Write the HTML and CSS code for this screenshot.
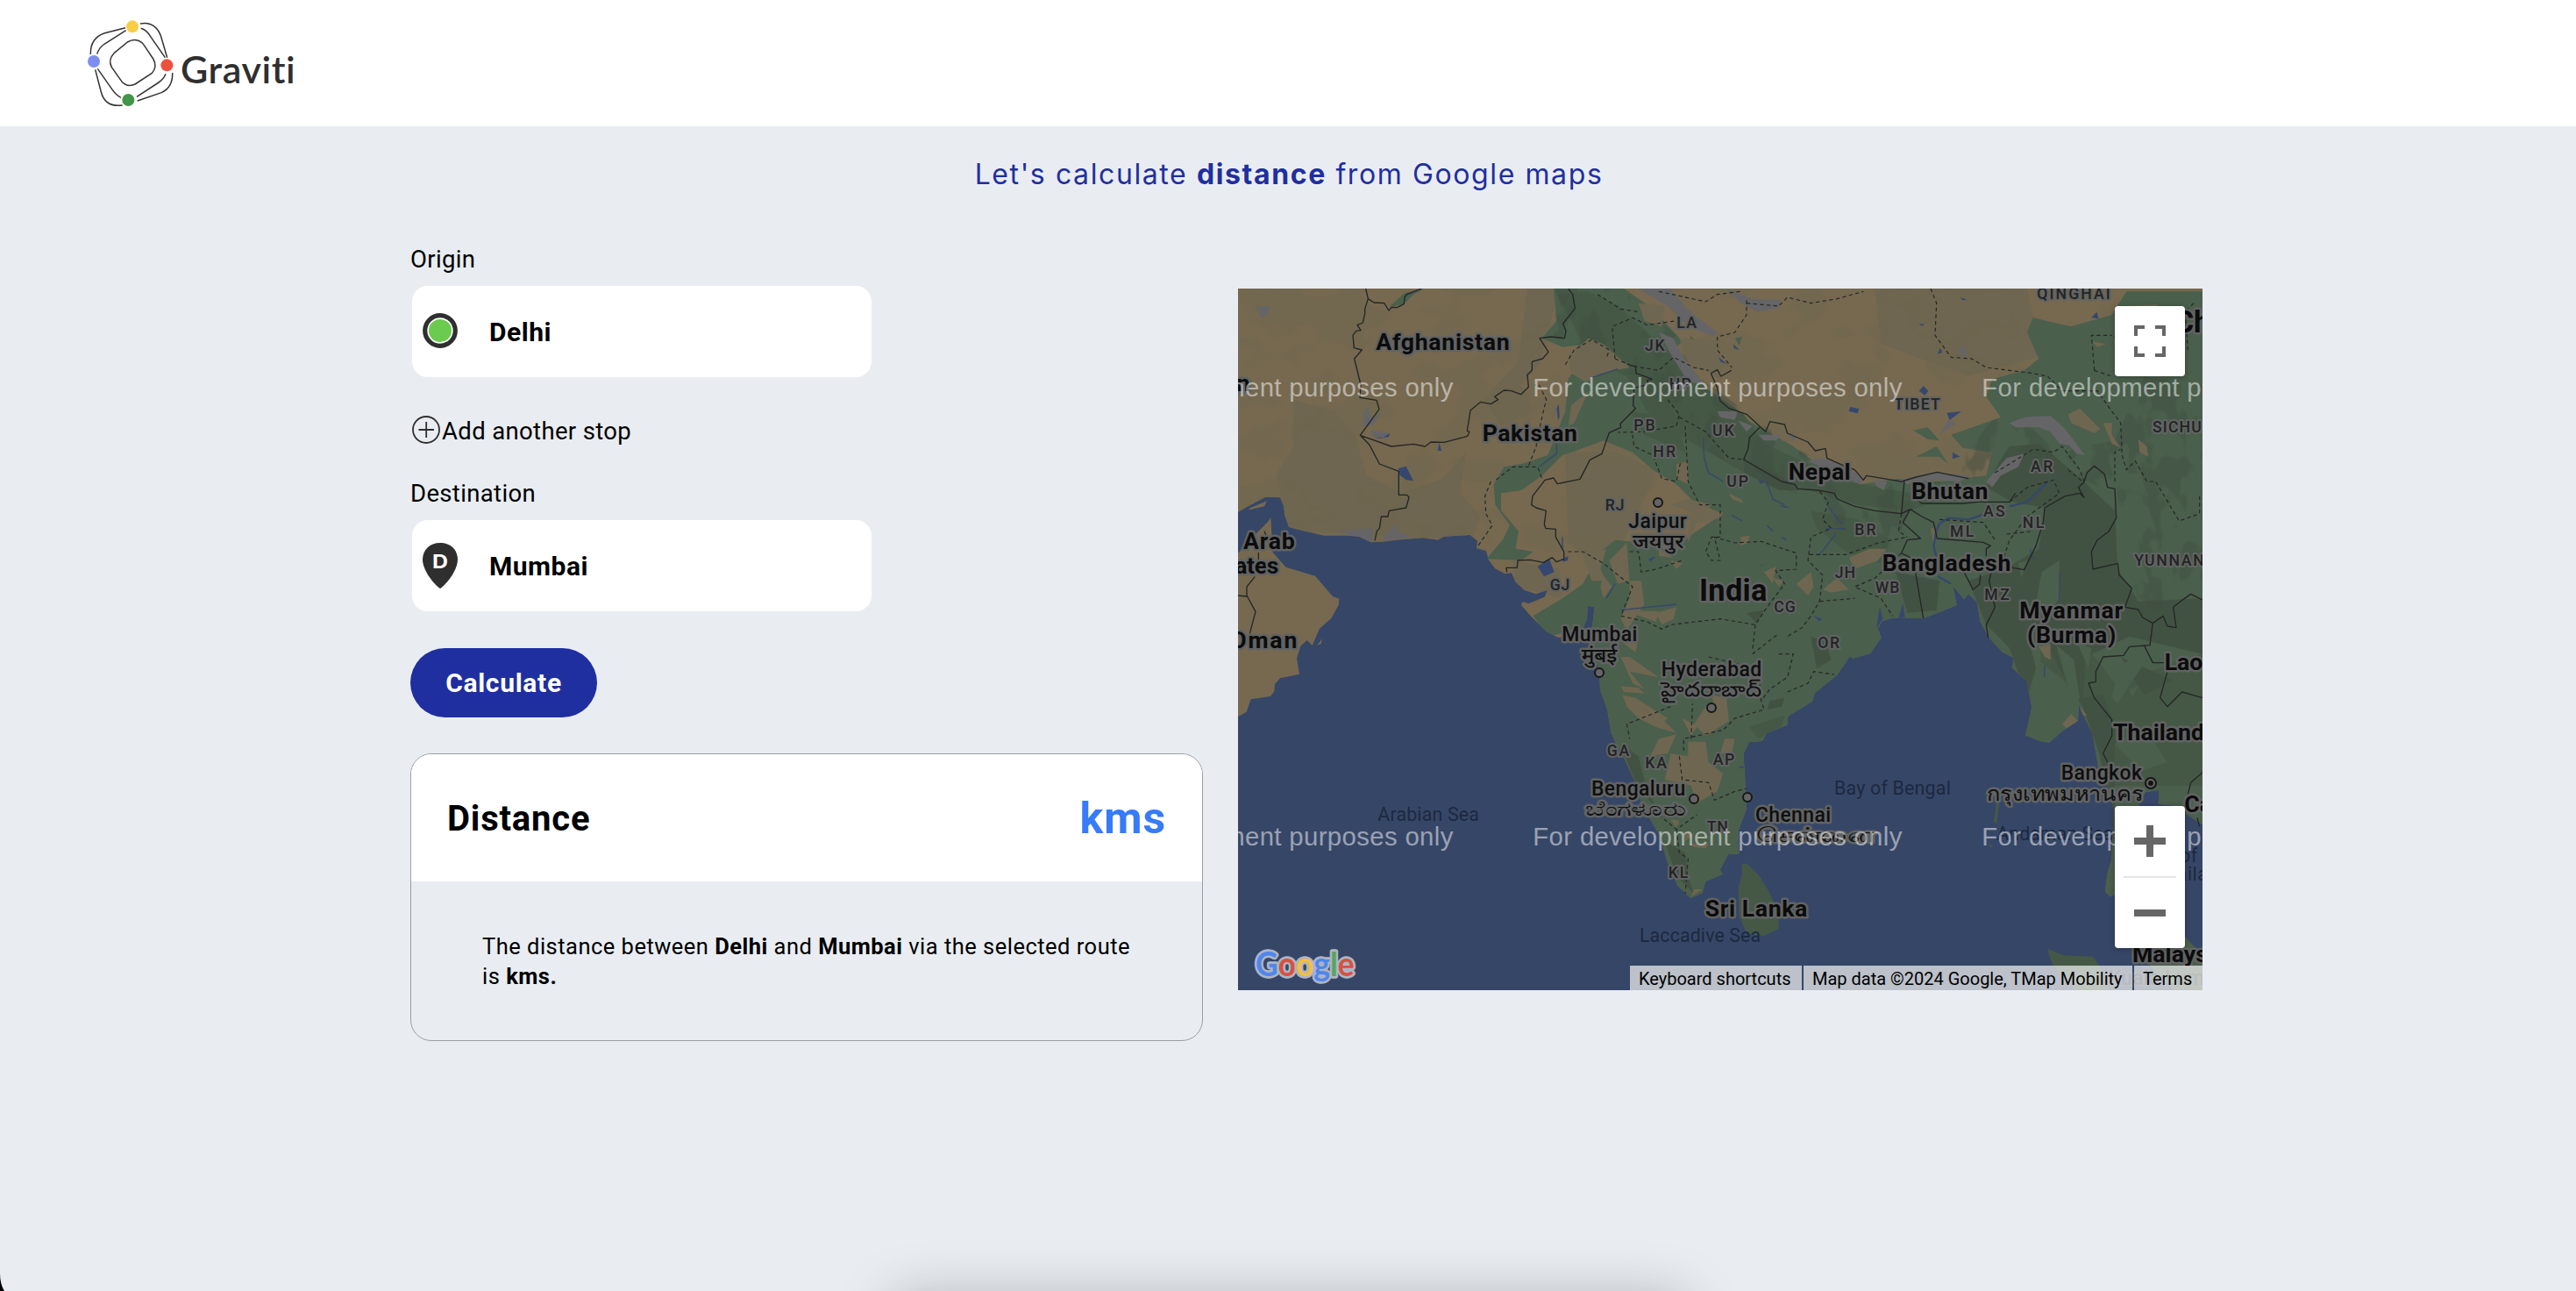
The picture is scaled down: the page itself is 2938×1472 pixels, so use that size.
FILE: index.html
```html
<!DOCTYPE html>
<html lang="en">
<head>
<meta charset="utf-8">
<title>Graviti</title>
<link rel="stylesheet" href="styles.css">
</head>
<body>
<header class="header">
  <svg class="logo-mark" viewBox="0 0 300 300" width="100" height="100" fill="none" stroke="#333" stroke-width="4.500">
    <path d="M136 78 Q163 62 186 80 Q190 84 193 89 L224 135 Q240 162 219 185 L162 222 Q135 234 116 212 L82 164 Q69 138 90 116 Z" stroke-linejoin="round"/>
    <path d="M129 29 L58 47 Q8 64 10 120M131 38 L58 84 Q38 98 32 119M180 15 Q232 6 251 59 L272 131M182 31 Q202 36 217 62 L265 131M290 183 Q292 233 252 251 L170 279M267 187 Q260 205 243 216 L168 265M26 172 L46 249 Q60 302 119 294M34 169 L83 239 Q96 259 114 268"/>
    <g stroke="none"><circle cx="153" cy="25" r="21" fill="#f8cd46"/><circle cx="21" cy="144" r="21" fill="#7d8df0"/><circle cx="271" cy="157" r="21" fill="#ee503e"/><circle cx="139" cy="276" r="21" fill="#429649"/></g>
  </svg>
  <span class="logo-name">Graviti</span>
</header>
<main class="page">
  <h1 class="title">Let's calculate <b>distance</b> from Google maps</h1>
  <div class="columns">
    <section class="form">
      <label class="label">Origin</label>
      <div class="field">
        <svg width="40" height="52" viewBox="0 0 40 52"><circle cx="20" cy="25" r="17.300" fill="#fff" stroke="#2f2f2f" stroke-width="5.200"/><circle cx="20" cy="25" r="13" fill="#6acb4f"/></svg>
        <span class="city">Delhi</span>
      </div>
      <div class="add-stop">
        <svg width="32" height="32" viewBox="0 0 32 32" fill="none" stroke="#2f2f2f" stroke-width="1.800"><circle cx="16" cy="16" r="15"/><path d="M7.500 16h17.500M16.200 7v18"/></svg>
        <span>Add another stop</span>
      </div>
      <label class="label label-dest">Destination</label>
      <div class="field">
        <svg width="40" height="52" viewBox="0 0 40 52"><path d="M20 0C8 0 0 8 0 19C0 31 12 46 19 51.500Q20 52 21 51.500C28 46 40 31 40 19C40 8 32 0 20 0Z" fill="#2f2f2f"/><text class="pin-letter" x="11" y="28.500" textLength="18" lengthAdjust="spacingAndGlyphs">D</text></svg>
        <span class="city">Mumbai</span>
      </div>
      <button class="calculate">Calculate</button>
      <article class="result">
        <div class="result-head"><h2 class="result-title">Distance</h2><span class="result-value">kms</span></div>
        <p class="result-text">The distance between <b>Delhi</b> and <b>Mumbai</b> via the selected route<br>is <b>kms.</b></p>
      </article>
    </section>
    <section class="map">
      <svg class="map-canvas" viewBox="0 0 3300 2400" width="1100" height="800">
        <defs>
          <path id="mainland" d="M0 0H3300V1833L3284 1823 3244 1798 3240 1773 3149 1763 3152 1715 3104 1723 3084 1763 3050 1800 3040 1980 3060 2090 3240 2218 3264 2243 3300 2290V2400H3200L3060 2250 3000 2073 2984 2080 2967 2063 2974 2003 2989 1953 2996 1793 2989 1733 2944 1643 2936 1593 2924 1523 2884 1443 2877 1418 2874 1478 2819 1515 2776 1553 2744 1548 2694 1528 2716 1433 2699 1343 2649 1298 2654 1263 2614 1243 2569 1193 2539 1138 2529 1073 2499 1045 2484 1063 2446 1018 2459 1083 2399 1108 2344 1128 2234 1128 2204 1138 2189 1163 2201 1195 2164 1248 2104 1265 2094 1258 2049 1323 1974 1383 1964 1413 1882 1463 1879 1493 1809 1521 1794 1548 1749 1551 1729 1593 1734 1653 1739 1783 1712 1853 1714 1935 1679 1933 1649 1988 1659 2003 1599 2028 1589 2068 1549 2085 1504 2043 1469 1963 1444 1873 1409 1813 1379 1758 1354 1678 1324 1613 1294 1558 1276 1518 1264 1443 1239 1373 1236 1303 1200 1220 1214 1140 1220 1090 1196 1085 1194 1130 1180 1165 1140 1195 1094 1193 1054 1173 1004 1123 969 1083 974 1071 994 1078 1049 1055 1059 1031 1019 1045 979 1031 949 1003 936 973 914 976 879 958 857 928 849 898 816 888 819 863 794 843 704 848 684 860 634 853 564 858 494 866 454 868 414 848 374 845 294 845 224 829 174 816 159 773 156 743 144 715 94 713 29 748 0 765Z"/>
          <path id="green" d="M1080 0H1320L1420 70 1520 180 1500 200 1560 290 1640 390 1760 460 1900 540 2010 620 2130 670 2260 650 2400 660 2560 640 2580 560 2480 545 2440 500 2610 440 2560 370 2580 310 2690 280 2740 240 2700 150 2720 100 2850 130 2990 90 3040 10H3300V2400H1300V1600L1250 1450 1190 1160 1060 1190 1010 1120 1110 1060 1180 1010 1240 900 1290 860 1390 870 1500 900 1540 850 1660 770 1560 730 1500 670 1420 620 1350 560 1250 520 1170 550 1110 570 1040 640 970 690 900 700 900 760 960 830 950 890 1010 900 970 930 850 925 905 860 930 810 880 740 875 670 910 610 970 600 1060 570 1120 420 1130 310 1170 250 1200 190 1110 200 1040 170 1090 110Z"/>
          <clipPath id="land"><use href="#mainland"/></clipPath>
          <clipPath id="hills"><path d="M1080 0H1320L1520 180 1560 290 1900 540 2130 670 2400 660 2600 430 2720 480 2800 560 3000 520 3100 300 3300 330V1100H3060L3020 860 2990 700 2700 560 2560 660 2300 760 2230 900 2100 850 1900 700 1680 600 1490 480 1360 300 1200 230 1080 160Z"/></clipPath>
          <filter id="relief" x="0" y="0" width="100%" height="100%" color-interpolation-filters="sRGB">
            <feTurbulence type="fractalNoise" baseFrequency=".0045 .006" numOctaves="3" seed="8"/>
            <feColorMatrix values="0 0 0 0 .43 0 0 0 0 .4 0 0 0 0 .31 12 0 0 0 -6.200"/>
          </filter>
          <filter id="ridges" x="0" y="0" width="100%" height="100%" color-interpolation-filters="sRGB">
            <feTurbulence type="fractalNoise" baseFrequency=".012 .007" numOctaves="3" seed="3"/>
            <feColorMatrix values="0 0 0 0 .25 0 0 0 0 .31 0 0 0 0 .25 12 0 0 0 -6.200"/>
          </filter>
        </defs>
        <rect width="3300" height="2400" fill="#364667"/>
        <use href="#mainland" fill="#766950"/>
        <g clip-path="url(#land)">
          <path fill="#6e6650" d="M190 380 330 420 400 500 440 640 560 700 700 650 780 560 760 700 830 780 800 860 180 830 160 760 130 640 190 540ZM990 0H1100L1030 260 970 330 1010 420 900 470 840 380 960 250ZM1120 560 1290 560 1430 620 1400 700 1300 900 1190 920 1130 870ZM2180 0H2700L2750 230 2500 300 2200 190ZM940 930 1100 960 1110 1060 950 1020Z"/>
          <rect width="3300" height="900" filter="url(#relief)" opacity=".4"/>
          <use href="#green" fill="#4a5f4c"/>
          <path fill="#4a5f4c" d="M520 60 570 15 640 0 600 20 570 50 530 62ZM1545 160 1590 200 1600 220 1560 205ZM1700 170 1725 165 1715 195ZM2310 485 2360 475 2400 520 2360 515ZM2320 575 2390 540 2430 600 2400 575Z"/>
          <path fill="#455845" d="M1090 20 1200 10 1300 60 1420 170 1490 230 1600 340 1730 430 1800 530 1950 600 2080 660 2300 700 2310 760 2120 740 1950 690 1750 640 1540 520 1400 420 1330 300 1200 240 1150 130ZM1340 420 1500 440 1530 560 1390 500ZM1960 760 2120 790 2230 860 2200 940 2080 900 1980 820ZM2650 1200 2900 1220 3000 1350 3300 1250V1700H2980L2900 1400ZM1750 1500 1870 1460 1860 1500 1780 1540Z"/>
          <path fill="#425242" d="M2560 680 2600 600 2640 540 2740 530 2850 620 3000 760 3010 960 3080 1070 3300 1060V1250L3050 1190 2900 1260 2890 1430 2840 1360 2760 1200 2700 1400 2640 1230 2560 1150 2500 1000 2640 950 2740 890 2760 750 2650 730ZM2880 1400 2960 1390 3000 1500 3000 1900 2950 1600ZM2250 970 2400 1000 2390 1100 2290 1110ZM1730 580 1820 620 1920 690 1850 690 1730 630ZM1310 1560 1370 1600 1390 1680 1430 1780 1360 1690ZM1460 1890 1530 1930 1540 2010 1560 2070 1500 2010ZM1960 1190 2010 1210 2030 1270 1980 1300ZM1820 1410 1870 1400 1860 1430 1810 1440ZM1740 1110 1800 1100 1775 1145ZM3020 1260 3200 1340 3100 1390ZM2900 900 2990 860 2970 960 2920 980Z"/>
          <g clip-path="url(#hills)"><rect width="3300" height="1200" filter="url(#ridges)" opacity=".45"/></g>
          <path fill="#4a5f4c" d="M2750 970 2810 930 2810 1060 2760 1130 2730 1070ZM2710 1220 2750 1210 2740 1350 2700 1440 2720 1500 2690 1520 2730 1300ZM2800 1220 2860 1270 2880 1400 2800 1490 2790 1420 2850 1400ZM2670 940 2700 930 2680 990ZM2990 1400 3010 1300 3090 1240 3110 1270 3060 1340 3010 1420ZM2870 1210 2920 1230 2910 1300ZM3010 860 3060 830 3120 1010 3030 980ZM3000 1560 3100 1500 3180 1620 3090 1650ZM3050 1370 3080 1360 3060 1400Z"/>
          <path fill="#656567" d="M1370 0 1480 0 1530 60 1560 90 1640 150 1625 165 1540 130 1470 60ZM1670 0 1760 35 1860 40 1850 65 1780 80 1720 50ZM1440 150 1490 170 1520 230 1560 280 1600 330 1540 320 1490 240ZM1640 420 1710 420 1700 450 1650 440ZM1710 450 1760 470 1740 490ZM1780 500 1860 500 1840 520 1800 520ZM1870 490 1910 510 1900 520ZM1950 590 2000 580 2080 610 2140 650 2130 670 2020 620ZM2170 655 2220 660 2210 690 2190 680ZM2260 655 2390 630 2510 640 2470 660 2360 655 2290 670ZM2640 460 2690 440 2780 435 2830 480 2890 560 2870 540 2810 530 2780 490 2740 475 2660 475ZM2820 510 2870 540 2900 570 2870 565ZM2560 660 2630 580 2690 565 2670 610 2610 640 2580 680ZM2400 500 2430 450 2460 460 2430 480ZM60 60 110 62 100 90 80 102ZM430 430 440 400 455 440 490 425 460 470 425 470ZM455 485 520 495 510 515 460 505ZM350 830 460 820 460 868 400 850ZM500 850 540 805 545 830 590 850 500 865ZM2460 210 2490 200 2495 240Z"/>
          <path fill="#6e6650" d="M1130 230 1200 170 1250 190 1340 270 1240 290 1190 320 1140 290ZM1140 400 1200 350 1150 460 1130 470ZM1370 50 1460 60 1450 130 1390 110ZM1510 170 1640 180 1660 260 1650 310 1540 250ZM1180 920 1260 890 1240 960 1260 1000 1210 1000ZM1270 930 1330 870 1340 1000 1300 1010ZM1250 980 1280 1020 1250 1060 1240 1020ZM1340 1000 1380 1000 1390 1080 1330 1170 1310 1130 1340 1060ZM1320 1100 1440 1105 1430 1140ZM1430 1110 1500 1090 1490 1130 1450 1150ZM1500 600 1540 590 1540 670 1500 650ZM1540 720 1620 740 1580 780 1540 760 1480 740ZM1550 770 1660 765 1650 785 1570 800 1540 870 1540 840ZM1680 700 1720 720 1730 735 1690 720ZM1720 850 1750 845 1745 870 1720 880ZM1800 970 1840 950 1830 1010ZM1830 990 1870 1000 1850 1020ZM1910 1010 1960 970 1970 1020 1950 1050ZM2000 1030 2050 990 2090 1030 2030 1040ZM2090 920 2160 890 2220 890 2190 930 2110 960ZM2840 430 2880 410 2950 480 2930 495 2850 460ZM2960 460 2990 460 2990 500 3020 545 2990 530ZM3080 515 3110 540 3115 575 3085 560ZM2920 180 2970 190 2940 200ZM3030 60 3150 55 3100 90ZM2740 1225 2780 1215 2780 1270 2760 1260ZM2820 1490 2850 1455 2875 1480 2840 1510ZM2880 1430 2905 1460 2890 1460ZM1440 890 1490 920 1440 915ZM1480 930 1520 940 1500 960Z"/>
          <path fill="#6e6650" d="M1315 1210 1370 1200 1360 1245ZM1310 1260 1340 1260 1440 1330 1340 1310 1390 1370 1350 1350ZM1310 1360 1370 1365 1390 1385 1320 1380ZM1315 1390 1360 1400 1470 1470 1460 1480 1500 1520 1430 1500 1370 1470 1330 1430ZM1440 1540 1500 1525 1470 1590 1410 1600ZM1520 1470 1560 1490 1600 1430 1670 1390 1680 1480 1600 1530 1570 1500 1550 1530ZM1540 1550 1600 1550 1610 1620 1660 1660 1640 1720 1570 1760 1550 1700 1460 1680 1480 1590 1540 1600ZM1665 1540 1700 1540 1690 1590 1650 1590ZM1540 1900 1610 1900 1600 1915 1560 1910ZM1550 2080 1560 2055 1590 2055ZM1480 1815 1510 1820 1500 1845ZM1620 1390 1670 1400 1670 1430 1630 1430Z"/>
          <path fill="#6e6650" d="M2370 820 2385 820 2380 885ZM1530 1860 1560 1870 1530 1890Z"/>
        </g>
        <path fill="#766950" d="M0 905 60 840 100 800 112 783 114 820 119 903 164 953 264 983 324 1053 346 1061 344 1083 319 1128 279 1163 262 1203 254 1221 236 1203 214 1223 201 1265 210 1319 144 1333 126 1353 124 1378 111 1395 44 1405 29 1448 0 1465ZM36 753 98 727 90 745 40 757ZM270 1220 288 1198 284 1215Z"/>
        <path fill="#455845" d="M1723 1970 1740 1966 1785 2010 1815 2060 1850 2130 1850 2190 1800 2215 1740 2205 1715 2150 1712 2050 1725 2000ZM2769 2258 2824 2281 2924 2285 2955 2325 2980 2400H2864L2784 2308ZM2594 1760 2605 1760 2596 1830 2586 1825ZM2570 1900 2582 1905 2575 1915Z"/>
        <g fill="#36476f">
          <path d="M549 615 575 608 600 658 575 655 550 635ZM683 555 688 528 697 555ZM1090 410 1098 395 1100 440 1095 450ZM1025 950 1065 925 1082 970 1047 985ZM1110 925 1130 915 1128 930 1112 935ZM465 510 490 512 520 495 515 508ZM2425 425 2475 420 2435 450ZM2330 350 2345 333 2362 350 2350 365ZM2095 405 2125 412 2120 427 2090 420ZM2920 100 2938 80 2945 103ZM2445 560 2470 575 2445 582ZM1695 190 1715 210 1697 205ZM1645 235 1675 260 1650 250ZM2394 225 2402 203 2410 218ZM2330 120 2350 122 2340 128ZM2470 30 2495 38 2480 40ZM1780 655 1800 658 1790 670ZM1405 925 1430 915 1410 935ZM1850 740 1890 748 1870 750ZM1780 950 1810 940 1790 948ZM1970 1120 2000 1130 1988 1138ZM1710 1635 1735 1635 1725 1642Z"/>
          <path d="M2184 1163 2196 1090 2206 1130ZM2260 1130 2275 1075 2282 1125Z"/>
        </g>
        <g fill="none" stroke="#36476f" stroke-width="7"><path d="M2770 660 2760 670 2700 730 2640 745M2560 770 2500 790 2430 785 2400 805 2390 825 2380 880 2390 920M2395 985 2440 1010"/><path stroke-width="4" d="M1592 510 1595 580 1610 630 1660 660M1808 660 1830 720 1870 740M2020 745 2065 805M2010 820 2080 822M2045 840 1990 910M1090 530 1090 565 1030 610M1110 850 1110 890M1310 1100 1500 1080M1210 305 1300 275M1690 775 1725 795M1810 810 1830 830M1860 850 1875 860M1260 1060 1290 1010M2812 970 2810 1070M2759 1290V1330M2720 930 2710 890"/></g>
        <g fill="none" stroke="#242626" stroke-width="4" stroke-linejoin="round">
          <path d="M437 0 445 35 465 48 500 50 516 75 525 64 545 65 568 52 570 30 578 20 628 0M445 35 434 70 434 85 427 117 408 125 420 143 404 145 393 160 397 203 424 210 398 240 420 330 417 373 474 382 483 413 418 502 525 540 600 532 640 540 660 525 705 526 785 505 792 490 784 487 795 417 830 388 865 395 890 380 878 370 910 348 935 350 968 362 994 337 990 295 1006 280 1006 250 1042 240 1062 217 1032 170 1070 165 1117 170 1122 145 1112 120 1153 68 1145 20 1130 0M418 502 450 535 484 600 550 625 550 706 578 706 585 714 575 750 517 760 513 780 490 780 484 820 475 830 468 862"/>
          <path d="M920 970 918 955 955 955 957 930 1000 928 1045 937 1075 920 1090 935 1115 925 1115 900 1087 850 1087 823 1052 820 1048 805 1054 760 1020 750 1004 740 1008 710 1050 655 1080 648 1092 668 1170 652 1204 586 1245 565 1270 493 1310 475 1308 463 1360 410 1352 400 1355 340 1403 328 1400 313 1418 310M1418 310 1362 290 1360 265 1340 263M1618 290 1640 278 1652 300 1688 280M1618 290 1640 340 1650 385 1680 410 1740 430 1805 490 1820 455 1870 465 1880 495 1950 525 1975 555 2010 547 2015 580 2070 605 2110 620 2140 655 2150 640 2240 655 2270 660 2320 645 2392 628 2500 650M1785 475 1750 510 1745 550 1730 585 1860 660 1905 670 1915 685 1985 690 2040 700 2050 720 2110 745 2180 760 2270 770 2280 655M2320 720 2340 735 2480 735 2530 730 2640 730 2660 700M2270 770 2300 755 2340 780 2380 800 2392 855 2550 868 2575 880 2560 890 2560 915M2300 755 2275 800 2335 855 2290 860 2270 905 2310 925 2345 1128M2484 970 2500 1000 2515 1030 2538 1010 2540 980M2580 960 2570 1000 2590 1090 2560 1150 2567 1195M2620 950 2690 962 2730 880 2755 800 2760 750 2830 710 2880 700 2895 715 2875 680 2895 662M2895 662 2905 630 2930 607 2965 635 2975 680 3000 685 3005 785 2980 830 2940 860 2920 900 2925 960 3010 940 3015 980 3058 1025 3035 1090 3080 1098 3095 1125 3130 1145 3165 1120 3180 1155 3210 1160 3200 1090 3225 1070 3260 1045 3300 1065M3130 1145 3120 1220 3050 1225 3030 1255 2960 1260 2935 1310 2935 1345 2910 1350 2930 1400 2990 1475 2990 1530 2960 1590 2975 1620M3100 1220 3130 1280 3190 1280M3180 1310 3155 1400 3180 1430 3230 1380 3300 1400M3300 1655 3260 1690 3250 1730M70 903 70 930M90 830 105 865M58 985 30 1020 30 1050 60 1105 40 1180M0 1050 30 1053M3282 1810 3290 1840"/>
        </g>
        <g fill="none" stroke="#242626" stroke-width="3.500" stroke-dasharray="13 10">
          <path d="M883 654 940 610 1025 610 1040 650M995 605 1020 540 1040 440 1055 380 1030 330 1015 330M865 660 845 710 848 770 870 810 820 882M1120 260 1150 210 1210 175 1270 210 1260 240M1290 240 1280 130 1350 100 1400 125 1500 110M1230 20 1310 70 1370 80M1440 10 1600 45 1640 20 1720 10M1740 40 1740 90 1700 150 1640 165 1640 210 1690 270M1740 50 1850 60 1880 30 1960 50 2050 35 2140 10M1290 240 1350 265 1440 280 1490 235 1560 270 1610 280M1470 380 1510 430 1500 470 1390 490 1300 492M1350 500 1355 540 1420 570 1450 650 1500 660 1515 590M1510 440 1600 490 1680 580 1735 585M1530 470 1540 660 1580 740 1650 740 1650 850 1620 850 1600 900 1620 930 1650 930 1630 850 1700 870 1790 865 1910 905 1910 960 1840 965 1870 1010 1810 1090 1770 1150 1650 1130 1480 1150 1450 1165 1400 1140 1310 1120 1350 1020 1250 940 1180 900 1120 900M1340 900 1370 900 1380 970 1430 960 1520 930M1990 695 2020 730 2000 790 2030 820 1960 850 1950 930 2000 980 1990 1070 1960 1120 1930 1160 1880 1190M1955 910 2080 910 2190 870 2290 850M2270 905 2180 990 2110 1020 2200 1060 2240 1120M1990 1070 2110 1060M1610 1260 1780 1300 1790 1410 1800 1440 1700 1470 1660 1510 1525 1540 1525 1580M1760 1250 1850 1180M1770 1150 1760 1240M1850 1250 1900 1250 1880 1330 1820 1370 1790 1410M1880 1380 1950 1350 1970 1310 2040 1320M1480 1430 1330 1490 1340 1540M1550 1540 1555 1420M1510 1600 1520 1680 1610 1690 1630 1750 1700 1720 1740 1710M1440 1800 1500 1850 1570 1800M1500 1850 1510 1930 1540 1950 1530 2070"/>
          <path d="M2370 0 2390 50 2385 160 2440 235 2510 240 2560 270 2640 280 2720 290 2770 300 2820 350 2940 350 2990 420 3020 460 3025 570 3040 620 3070 590 3110 660 3140 660 3220 795 3290 770 3290 700M3000 160 3010 230M2930 280 2920 160 2990 160M2930 280 2990 300M3270 50 3240 80 3250 210M2590 630 2640 600 2720 550 2790 560 2820 540 2880 620 2895 660M2640 730 2700 680 2790 655 2810 700 2700 780 2640 860 2620 920M2840 620 2890 660M2400 790 2550 800 2590 860M2270 770 2260 830 2290 850M2630 840 2720 830M3000 660 3000 560 3020 550"/>
        </g>
        <g class="area">
          <text x="1501" y="136" textLength="68">LA</text><text x="1392" y="213" textLength="68">JK</text><text x="1475" y="344" textLength="75">HP</text><text x="1354" y="487" textLength="73">PB</text><text x="1623" y="505" textLength="75">UK</text><text x="1420" y="577" textLength="77">HR</text><text x="1672" y="677" textLength="74">UP</text><text x="1256" y="760" textLength="66">RJ</text><text x="2110" y="842" textLength="73">BR</text><text x="2042" y="991" textLength="70">JH</text><text x="2180" y="1042" textLength="83">WB</text><text x="1834" y="1106" textLength="73">CG</text><text x="1067" y="1032" textLength="68">GJ</text><text x="1984" y="1231" textLength="74">OR</text><text x="1262" y="1600" textLength="77">GA</text><text x="1393" y="1642" textLength="74">KA</text><text x="1625" y="1629" textLength="74">AP</text><text x="1604" y="1861" textLength="72">TN</text><text x="1472" y="2017" textLength="68">KL</text>
          <text x="2712" y="628" textLength="76">AR</text><text x="2550" y="781" textLength="74">AS</text><text x="2684" y="820" textLength="74">NL</text><text x="2436" y="850" textLength="82">ML</text><text x="2554" y="1065" textLength="86">MZ</text><text x="2245" y="414" textLength="157">TIBET</text><text x="2734" y="37" textLength="250">QINGHAI</text><text x="3129" y="492" textLength="205">SICHUA</text><text x="3067" y="948" textLength="238">YUNNAN</text>
        </g>
        <g class="sea">
          <text x="478" y="1821" textLength="348">Arabian Sea</text><text x="2040" y="1730" textLength="400">Bay of Bengal</text><text x="1374" y="2234" textLength="416">Laccadive Sea</text><text x="2596" y="1886" textLength="400">Andaman Sea</text><text x="3222" y="1963">of</text><text x="3136" y="2025">Thailand</text>
        </g>
        <g class="country">
          <text x="472" y="211" textLength="457">Afghanistan</text><text x="836" y="523" textLength="325">Pakistan</text><text x="1883" y="655" textLength="213">Nepal</text><text x="2304" y="721" textLength="262">Bhutan</text><text x="2204" y="965" textLength="440">Bangladesh</text><text x="2674" y="1129" textLength="354">Myanmar</text><text x="2700" y="1212" textLength="304">(Burma)</text><text x="18" y="891" textLength="176">Arab</text><text x="-170" y="976" textLength="309">Emirates</text><text x="-26" y="1231" textLength="228">Oman</text><text x="-100" y="352" textLength="140">Iran</text><text x="1598" y="2148" textLength="350">Sri Lanka</text><text x="3170" y="1304">Laos</text><text x="2994" y="1546">Thailand</text><text x="3238" y="1792">Cambodia</text><text x="3060" y="2303">Malaysia</text><text class="large" x="3203" y="150">China</text><text class="large" x="1578" y="1069" textLength="232">India</text>
        </g>
        <g class="town">
          <text x="1336" y="819" textLength="200">Jaipur</text><text x="1350" y="887" textLength="176" lengthAdjust="spacingAndGlyphs">जयपुर</text><text x="1108" y="1207" textLength="258">Mumbai</text><text x="1175" y="1277" textLength="122" lengthAdjust="spacingAndGlyphs">मुंबई</text><text x="1448" y="1326" textLength="344">Hyderabad</text><text x="1446" y="1395" textLength="345" lengthAdjust="spacingAndGlyphs">హైదరాబాద్</text><text x="1209" y="1735" textLength="322">Bengaluru</text><text x="1187" y="1804" textLength="344" lengthAdjust="spacingAndGlyphs">ಬೆಂಗಳೂರು</text><text x="1770" y="1824" textLength="258">Chennai</text><text x="1772" y="1894" textLength="405" lengthAdjust="spacingAndGlyphs">சென்னை</text><text x="2816" y="1680" textLength="277">Bangkok</text><text x="2562" y="1753" textLength="534" lengthAdjust="spacingAndGlyphs">กรุงเทพมหานคร</text><text x="2978" y="2382" textLength="330" class="faded">Kuala Lum</text>
        </g>
        <g fill="#656567" stroke="#171717" stroke-width="6"><circle cx="1437" cy="732" r="15"/><circle cx="1236" cy="1314" r="15"/><circle cx="1620" cy="1434" r="15"/><circle cx="1560" cy="1746" r="15"/><circle cx="1743" cy="1740" r="15"/><circle cx="3123" cy="1692" r="18"/><circle cx="3123" cy="1692" r="6" fill="#111"/></g>
        <g class="watermark">
          <text x="-527" y="368" textLength="1263">For development purposes only</text><text x="1009" y="368" textLength="1263">For development purposes only</text><text x="2545" y="368" textLength="1263">For development purposes only</text>
          <text x="-527" y="1904" textLength="1263">For development purposes only</text><text x="1009" y="1904" textLength="1263">For development purposes only</text><text x="2545" y="1904" textLength="1263">For development purposes only</text>
        </g>
        <text class="google" x="60" y="2352" textLength="338" lengthAdjust="spacingAndGlyphs"><tspan fill="#5086ec">G</tspan><tspan fill="#d85140">o</tspan><tspan fill="#f1be42">o</tspan><tspan fill="#5086ec">g</tspan><tspan fill="#58a55c">l</tspan><tspan fill="#d85140">e</tspan></text>
      </svg>
      <button class="control fullscreen"><svg width="36" height="36" viewBox="0 0 36 36"><path fill="#666" d="M0 0H12V4H4V12H0ZM24 0H36V12H32V4H24ZM0 24H4V32H12V36H0ZM32 24H36V36H24V32H32Z"/></svg></button>
      <div class="control zoom"><svg width="60" height="162" viewBox="0 0 60 162"><path fill="#666" d="M26 22H34V36H48V44H34V58H26V44H12V36H26ZM12 118H48V126H12Z"/><path fill="#e6e6e6" d="M0 80H60V82H0Z"/></svg></div>
      <div class="credits"><span class="c-keys">Keyboard shortcuts</span><span class="c-data">Map data ©2024 Google, TMap Mobility</span><span class="c-terms">Terms</span></div>
    </section>
  </div>
</main>
<div class="dock"><div class="dock-shadow"></div></div>
<svg class="corner" width="5" height="22" viewBox="0 0 5 22"><path d="M0 2Q0 14 5 22H0Z"/></svg>
</body>
</html>
```
FILE: styles.css
```css
* { box-sizing: border-box; }
body { margin: 0; height: 1472px; overflow: hidden; position: relative; background: #e9edf2; color: #000; font-family: Roboto, sans-serif; }
.header { display: flex; height: 144px; padding: 22px 0 0 100px; background: #fff; }
.logo-mark { flex: none; overflow: visible; }
.logo-name { margin-left: 6px; padding-top: 31px; font: 600 43px/52px Lato, sans-serif; color: #2f2f2f; letter-spacing: .6px; }
.title { margin: 0; padding-top: 35px; height: 134px; padding-left: 2px; text-align: center; font: 400 32px/40px Inter, sans-serif; color: #1f2f9f; letter-spacing: 1.6px; }
.title b { font-weight: 700; }
.columns { display: grid; grid-template-columns: 904px 1100px; column-gap: 40px; align-items: start; padding-left: 468px; }
.form { display: flex; flex-direction: column; align-items: flex-start; }
.label, .add-stop { font-size: 27.5px; line-height: 36px; letter-spacing: .35px; }
.label { margin: 0 0 12px; }
.field { display: flex; align-items: center; gap: 36px; width: 524px; height: 104px; margin-left: 2px; padding-left: 12px; border-radius: 18px; background: #fff; }
.city { font-size: 30px; font-weight: 700; letter-spacing: .5px; }
.pin-letter { font: 700 21px Inter, sans-serif; fill: #fff; }
.add-stop { display: flex; gap: 2px; margin: 44px 0 35px 2px; }
.calculate { width: 213px; height: 79px; margin-top: 42px; border: 0; border-radius: 40px; background: #1f2f9f; color: #fff; font: 700 30px Roboto, sans-serif; letter-spacing: .7px; }
.result { width: 904px; height: 328px; margin-top: 41px; border: 1.5px solid #9b9fa5; border-radius: 24px; overflow: hidden; }
.result-head { display: flex; justify-content: space-between; align-items: center; height: 145px; padding: 1px 41px 0; background: #fff; }
.result-title { margin: 0; font-size: 40px; font-weight: 700; letter-spacing: .8px; }
.result-value { font-size: 50px; font-weight: 700; color: #377bf9; letter-spacing: .9px; }
.result-text { margin: 0; padding: 57px 0 0 81px; font-size: 25.5px; line-height: 34px; letter-spacing: .48px; white-space: nowrap; }
.map { position: relative; width: 1100px; height: 800px; margin-top: 51px; overflow: hidden; }
.map-canvas { display: block; font-family: Roboto, "Noto Sans", sans-serif; }
.area, .country, .town { paint-order: stroke; stroke: #616363; stroke-width: 15px; stroke-linejoin: round; }
.area { font-size: 53px; font-weight: 500; fill: #242424; stroke-width: 12px; }
.sea { font-size: 64px; fill: #1c2940; letter-spacing: 1.5px; }
.country { font-size: 80px; font-weight: 700; fill: #0c0c0c; }
.large { font-size: 103px; }
.town { font-size: 69px; font-weight: 500; fill: #0f0f0f; }
.faded { opacity: .4; }
.watermark { font-family: "Liberation Sans", sans-serif; font-size: 88px; fill: rgba(255, 255, 255, .5); }
.google { font: 700 112px Lato, sans-serif; paint-order: stroke; stroke: #aeb5c3; stroke-width: 16px; stroke-linejoin: round; }
.control { position: absolute; right: 20px; display: flex; align-items: center; justify-content: center; width: 80px; padding: 0; border: 0; border-radius: 4px; background: #fff; box-shadow: 0 1px 6px rgba(0, 0, 0, .3); }
.fullscreen { top: 20px; height: 80px; }
.zoom { top: 590px; height: 162px; }
.credits { position: absolute; right: 0; bottom: 0; display: flex; gap: 2px; font-size: 20px; line-height: 30px; height: 28px; white-space: nowrap; }
.credits span { padding-left: 10px; background: rgba(245, 245, 245, .7); }
.c-keys { width: 196px; }
.c-data { width: 375px; }
.c-terms { width: 78px; }
.dock { position: absolute; left: 0; right: 0; bottom: 0; height: 90px; overflow: hidden; pointer-events: none; }
.dock-shadow { width: 900px; height: 100px; margin: 100px 0 0 1020px; box-shadow: 0 0 64px rgba(0, 0, 0, .28); }
.corner { position: absolute; left: 0; bottom: 0; }
```
